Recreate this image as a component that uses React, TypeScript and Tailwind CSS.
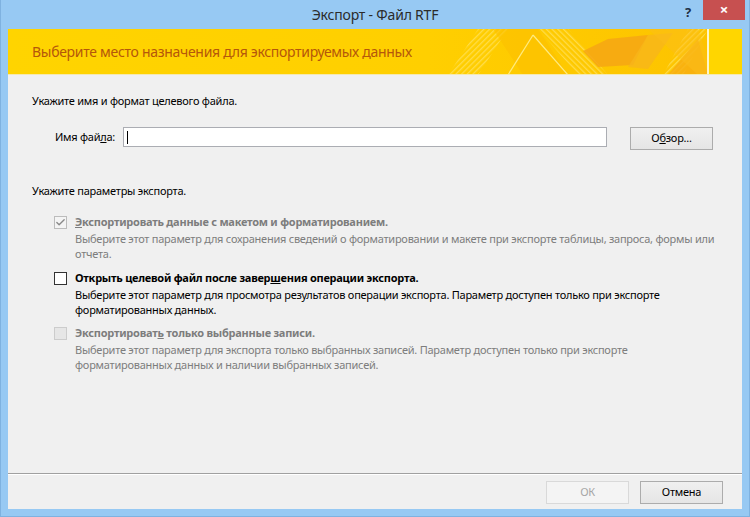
import { Check } from 'lucide-react';

const font = { fontFamily: '"Noto Sans", "Open Sans", sans-serif' };

function Banner() {
  return (
    <div className="relative h-[46px] bg-[#ffd200] flex items-center overflow-hidden border-b border-[#f5e9b0]">
      <svg className="absolute left-0 top-0" width="734" height="46" viewBox="0 0 734 46">
        <defs>
          <linearGradient id="bg" x1="0" x2="1" y1="0" y2="0">
            <stop offset="0" stopColor="#ffd400" />
            <stop offset="0.6" stopColor="#ffcf00" />
            <stop offset="1" stopColor="#fdc300" />
          </linearGradient>
          <pattern id="stripes" width="4" height="4" patternUnits="userSpaceOnUse" patternTransform="rotate(45)">
            <rect width="1.3" height="4" fill="#ffe56a" opacity="0.7" />
          </pattern>
          <pattern id="stripes2" width="4" height="4" patternUnits="userSpaceOnUse" patternTransform="rotate(-45)">
            <rect width="1.3" height="4" fill="#ffe56a" opacity="0.7" />
          </pattern>
        </defs>
        <rect width="700" height="46" fill="url(#bg)" />
        <polygon points="440,46 470,0 500,0 470,46" fill="url(#stripes)" />
        <polygon points="530,0 560,0 600,46 570,46" fill="url(#stripes2)" />
        <polygon points="485,0 530,0 560,46 515,46" fill="#fcc000" opacity="0.6" />
        <polygon points="600,10 640,6 625,36 590,38 575,22" fill="#f6a614" opacity="0.85" />
        <polygon points="640,6 665,4 640,40 620,38" fill="#f8b51a" opacity="0.8" />
        <polygon points="655,46 680,0 700,0 675,46" fill="url(#stripes)" />
        <polygon points="660,46 690,10 700,46" fill="#f7ae12" opacity="0.8" />
        <polygon points="640,0 690,0 700,30 700,46 690,46" fill="#fbbd1a" opacity="0.5" />
        <line x1="500" y1="46" x2="525" y2="6" stroke="#ffeb80" strokeWidth="1.2" />
        <line x1="525" y1="6" x2="560" y2="46" stroke="#ffeb80" strokeWidth="1.2" />
        <rect x="699" y="0" width="2" height="46" fill="#fff6c8" />
        <rect x="701" y="0" width="33" height="46" fill="#ffd600" />
      </svg>
      <span className="relative pl-[24px] text-[14px] tracking-[-0.3px] text-[#b5570b]" style={font}>
        Выберите место назначения для экспортируемых данных
      </span>
    </div>
  );
}

function Box({ state }: { state: 'checked-disabled' | 'empty' | 'disabled' }) {
  if (state === 'empty') {
    return <div className="w-[13px] h-[13px] border border-[#333333] bg-white shrink-0" />;
  }
  if (state === 'disabled') {
    return <div className="w-[13px] h-[13px] border border-[#cccccc] bg-[#e6e6e6] shrink-0" />;
  }
  return (
    <div className="w-[13px] h-[13px] border border-[#bcbcbc] bg-[#f4f4f4] shrink-0 flex items-center justify-center">
      <Check className="w-[11px] h-[11px] text-[#8a8a8a]" strokeWidth={3} />
    </div>
  );
}

function Option({
  state,
  label,
  lines,
  disabled,
}: {
  state: 'checked-disabled' | 'empty' | 'disabled';
  label: React.ReactNode;
  lines: string[];
  disabled: boolean;
}) {
  const color = disabled ? 'text-[#7d7d7d]' : 'text-[#000000]';
  return (
    <div className="flex gap-[8px] pl-[22px]">
      <div className="pt-[2px]">
        <Box state={state} />
      </div>
      <div className={`text-[11px] tracking-[-0.25px] whitespace-nowrap ${color}`} style={font}>
        <div className="leading-[16px] font-bold">{label}</div>
        <div className="mt-[1px] leading-[15px]">
          {lines.map((l, i) => (
            <div key={i}>{l}</div>
          ))}
        </div>
      </div>
    </div>
  );
}

export default function App() {
  return (
    <div className="w-[750px] h-[517px] bg-[#97c9f3] flex flex-col border-l border-r border-b border-[#7fb2e0]" style={font}>
      <div className="relative h-[29px] flex items-center justify-center shrink-0">
        <span className="text-[14px] tracking-[-0.2px] text-[#2b2b2b] -mt-[1px]">Экспорт - Файл RTF</span>
        <span className="absolute left-[684px] top-[3px] text-[13px] font-bold text-[#1e2f45]">?</span>
        <div className="absolute left-[702px] top-0 w-[42px] h-[20px] bg-[#c75050] flex items-center justify-center">
          <span className="text-white text-[15px] font-bold leading-none -mt-[1px]">×</span>
        </div>
      </div>
      <div className="mx-[7px] flex-1 flex flex-col bg-[#f0f0f0] text-[11px] tracking-[-0.25px]">
        <Banner />
        <div className="flex-1 flex flex-col pl-[24px]">
          <div className="mt-[18px] leading-[16px] text-black">Укажите имя и формат целевого файла.</div>
          <div className="mt-[18px] flex items-start">
            <div className="w-[91px] pl-[23px] pt-[2px] leading-[16px] text-black whitespace-nowrap">
              Имя фай<span className="underline">л</span>а:
            </div>
            <div className="w-[484px] h-[20px] border border-[#abadb3] bg-white flex items-center pl-[3px]">
              <div className="w-px h-[13px] bg-black" />
            </div>
            <div className="ml-[23px] w-[83px] h-[23px] border border-[#acacac] bg-gradient-to-b from-[#f0f0f0] to-[#e5e5e5] flex items-center justify-center text-black">
              О<span className="underline">б</span>зор...
            </div>
          </div>
          <div className="mt-[33px] leading-[16px] text-black">Укажите параметры экспорта.</div>
          <div className="mt-[15px]">
            <Option
              state="checked-disabled"
              disabled
              label={
                <>
                  <span className="underline">Э</span>кспортировать данные с макетом и форматированием.
                </>
              }
              lines={[
                'Выберите этот параметр для сохранения сведений о форматировании и макете при экспорте таблицы, запроса, формы или',
                'отчета.',
              ]}
            />
          </div>
          <div className="mt-[9px]">
            <Option
              state="empty"
              disabled={false}
              label={
                <>
                  Открыть целевой файл после завер<span className="underline">ш</span>ения операции экспорта.
                </>
              }
              lines={[
                'Выберите этот параметр для просмотра результатов операции экспорта. Параметр доступен только при экспорте',
                'форматированных данных.',
              ]}
            />
          </div>
          <div className="mt-[8px]">
            <Option
              state="disabled"
              disabled
              label={
                <>
                  Экспортироват<span className="underline">ь</span> только выбранные записи.
                </>
              }
              lines={[
                'Выберите этот параметр для экспорта только выбранных записей. Параметр доступен только при экспорте',
                'форматированных данных и наличии выбранных записей.',
              ]}
            />
          </div>
          <div className="flex-1" />
        </div>
        <div className="border-t border-[#a0a0a0]">
          <div className="border-t border-white flex justify-end gap-[11px] pr-[19px] pt-[6px] pb-[5px]">
            <div className="w-[83px] h-[23px] border border-[#d9d9d9] bg-[#f4f4f4] flex items-center justify-center text-[#a6a6a6]">
              ОК
            </div>
            <div className="w-[83px] h-[23px] border border-[#acacac] bg-gradient-to-b from-[#f0f0f0] to-[#e5e5e5] flex items-center justify-center text-black">
              Отмена
            </div>
          </div>
        </div>
      </div>
      <div className="h-[7px] shrink-0" />
    </div>
  );
}
